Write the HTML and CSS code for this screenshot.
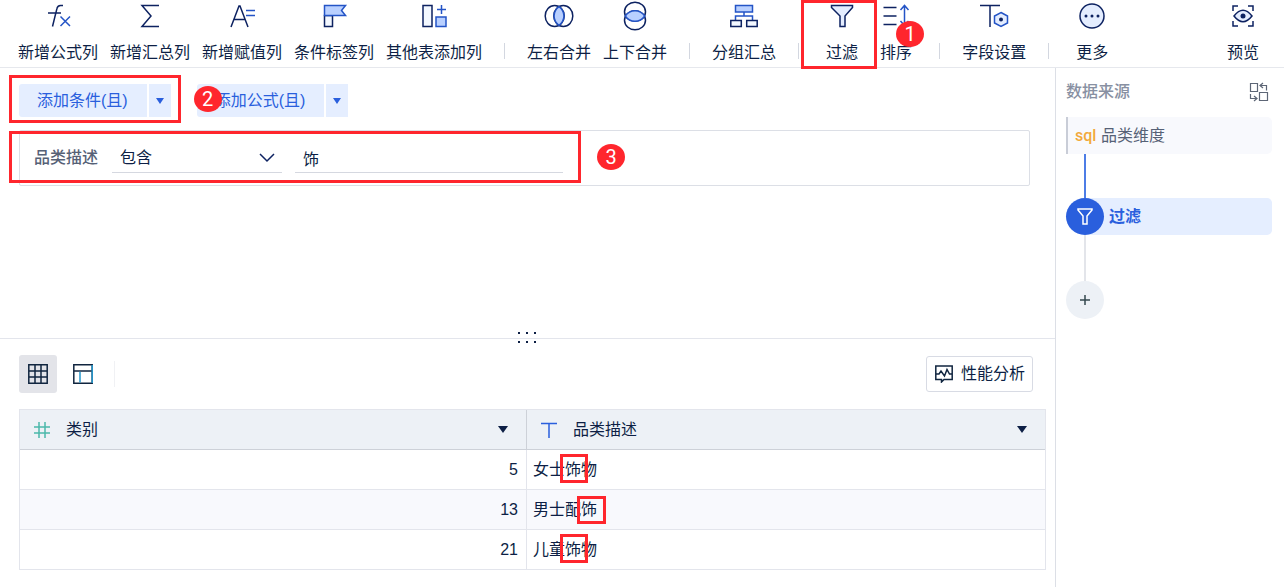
FILE: index.html
```html
<!DOCTYPE html>
<html lang="zh-CN">
<head>
<meta charset="UTF-8">
<meta name="viewport" content="width=device-width, initial-scale=1">
<title>过滤</title>
<link rel="stylesheet" href="styles.css">
</head>
<body>

<header class="toolbar">
  <button class="tool">
    <svg width="28" height="24" viewBox="0 0 28 24"><path d="M19 1.500h-2.500q-3 0-3.600 3.200L8.500 22.500M4 9h13"/><path class="blue" d="M16.500 12.500l9.500 9.500M26 12.500l-9.500 9.500"/></svg>
    <span>新增公式列</span>
  </button>
  <button class="tool">
    <svg width="28" height="24" viewBox="0 0 28 24"><path d="M23 1.500H6L15 12 6 22.500h17"/></svg>
    <span>新增汇总列</span>
  </button>
  <button class="tool">
    <svg width="28" height="24" viewBox="0 0 28 24"><path d="M3 23L11 2h1l8 21M6 15.500h11"/><path class="blue" d="M18 6.500h9M18 11.500h9"/></svg>
    <span>新增赋值列</span>
  </button>
  <button class="tool">
    <svg width="28" height="24" viewBox="0 0 28 24"><path class="pale" d="M4.500 11.500h8v11h-8z"/><path class="blue fill" d="M4.500 1.500h21l-4 5 4 5h-21z"/></svg>
    <span>条件标签列</span>
  </button>
  <button class="tool">
    <svg width="28" height="24" viewBox="0 0 28 24"><path class="pale" d="M3 1.500h9v21H3z"/><path class="blue fill" d="M16 13h10v9.500H16z"/><path class="blue" d="M21.500 1v9M17 5.500h9"/></svg>
    <span>其他表添加列</span>
  </button>
  <i class="tool-line"></i>
  <button class="tool">
    <svg width="30" height="24" viewBox="0 0 30 24"><ellipse cx="10.700" cy="12" rx="9.500" ry="10.500"/><ellipse cx="19.300" cy="12" rx="9.500" ry="10.500"/><path class="blue fill" d="M15 2.700c6.600 5 6.600 13.600 0 18.600-6.600-5-6.600-13.600 0-18.600z"/></svg>
    <span>左右合并</span>
  </button>
  <button class="tool">
    <svg width="28" height="30" viewBox="0 0 28 30"><ellipse cx="14" cy="10.700" rx="10.500" ry="9.500"/><ellipse cx="14" cy="19.300" rx="10.500" ry="9.500"/><path class="blue fill" d="M4.200 15c5-7 14.600-7 19.600 0-5 7-14.600 7-19.600 0z"/></svg>
    <span>上下合并</span>
  </button>
  <i class="tool-line"></i>
  <button class="tool">
    <svg width="28" height="24" viewBox="0 0 28 24"><path class="blue fill" d="M5.500 1.500h17v6.500h-17z"/><path class="blue" d="M14 8v4M5.500 16v-4h17v4"/><path class="pale" d="M.8 16.500h10.500v6H.8zM16.700 16.500h10.500v6H16.700z"/></svg>
    <span>分组汇总</span>
  </button>
  <i class="tool-line"></i>
  <button class="tool">
    <svg width="28" height="24" viewBox="0 0 28 24"><path class="soft" d="M3.500 1.500h21v2L17 12v10.500h-5V12L3.500 3.500z"/></svg>
    <span>过滤</span>
    <i class="mark mark-tool"></i>
    <i class="step step-tool">1</i>
  </button>
  <button class="tool">
    <svg width="28" height="24" viewBox="0 0 28 24"><path d="M1.500 3.500h13M1.500 12h13M1.500 20.500h13"/><path class="blue" d="M22.500 2v19M18.500 6l4-4.500 4 4.500M18.500 17l4 4.500 4-4.500"/></svg>
    <span>排序</span>
  </button>
  <i class="tool-line"></i>
  <button class="tool">
    <svg width="30" height="24" viewBox="0 0 30 24"><path d="M1 1.500h20M11 1.500V23"/><path class="blue soft" d="M22 8.500l6.500 3.500v7L22 22.500 15.500 19v-7z"/><circle class="dot" cx="22" cy="15.500" r="2"/></svg>
    <span>字段设置</span>
  </button>
  <i class="tool-line"></i>
  <button class="tool">
    <svg width="28" height="26" viewBox="0 0 28 26"><circle class="soft" cx="14" cy="13" r="12"/><g class="dot"><circle cx="8" cy="13" r="1.500"/><circle cx="14" cy="13" r="1.500"/><circle cx="20" cy="13" r="1.500"/></g></svg>
    <span>更多</span>
  </button>
  <button class="tool tool-preview">
    <svg width="28" height="24" viewBox="0 0 28 24"><path d="M4 7V2h5M19 2h5v5M24 17v5h-5M9 22H4v-5"/><path class="soft" d="M5 12q9-11.500 18 0-9 11.500-18 0z"/><circle class="dot" cx="14" cy="12" r="2.500"/></svg>
    <span>预览</span>
  </button>
</header>

<div class="workspace">
  <main class="content">
    <section class="config">
      <div class="add-row">
        <div class="split-btn">
          <button class="split-main">添加条件(且)</button>
          <button class="split-arrow" aria-label="更多条件"><i class="caret"></i></button>
          <i class="mark mark-add"></i>
        </div>
        <div class="split-btn">
          <button class="split-main">添加公式(且)</button>
          <button class="split-arrow" aria-label="更多公式"><i class="caret"></i></button>
          <i class="step step-add">2</i>
        </div>
      </div>

      <div class="condition">
        <label for="operator">品类描述</label>
        <div class="select-box">
          <select id="operator">
            <option>包含</option>
            <option>不包含</option>
          </select>
          <svg width="16" height="10" viewBox="0 0 16 10"><path d="M1 1l7 7 7-7"/></svg>
        </div>
        <input type="text" value="饰" aria-label="包含的文字">
        <i class="mark mark-condition"></i>
        <i class="step step-condition">3</i>
      </div>
    </section>

    <div class="splitter">
      <svg width="20" height="12" viewBox="0 0 20 12"><path d="M1 0h2v2H1zM9 0h2v2H9zM17 0h2v2h-2zM1 9h2v2H1zM9 9h2v2H9zM17 9h2v2h-2z"/></svg>
    </div>

    <section class="result">
      <div class="result-bar">
        <button class="view-btn active" aria-label="表格视图">
          <svg width="20" height="20" viewBox="0 0 20 20"><path d="M.8.8h18.400v18.400H.8zM.8 7h18.400M.8 13h18.400M7 .8v18.400M13 .8v18.400"/></svg>
        </button>
        <button class="view-btn" aria-label="布局视图">
          <svg width="20" height="20" viewBox="0 0 20 20"><path d="M.8.8h18.400v18.400H.8zM.8 7h18.400"/><path class="cyan" d="M7 7.800v10.700M19.200 1v18"/></svg>
        </button>
        <i class="bar-line"></i>
        <button class="perf-btn">
          <svg width="18" height="18" viewBox="0 0 18 18"><path d="M.8 1h16.400v13.500H9L6.500 17v-2.500H.8zM1 9h3l2-3 3.500 5L12 4.500 14.500 9H17"/></svg>
          性能分析
        </button>
      </div>

      <table>
        <thead>
          <tr>
            <th class="col-type">
              <div class="th-box">
                <svg class="number" width="16" height="16" viewBox="0 0 16 16"><path d="M5 0v16M11 0v16M0 5h16M0 11h16"/></svg>
                类别
                <i class="caret"></i>
              </div>
            </th>
            <th>
              <div class="th-box">
                <svg class="text" width="16" height="16" viewBox="0 0 16 16"><path d="M0 1.500h16M8 1.500V16"/></svg>
                品类描述
                <i class="caret"></i>
              </div>
            </th>
          </tr>
        </thead>
        <tbody>
          <tr><td class="num">5</td><td>女士<span class="hit">饰</span>物</td></tr>
          <tr><td class="num">13</td><td>男士配<span class="hit hit-end">饰</span></td></tr>
          <tr><td class="num">21</td><td>儿童<span class="hit">饰</span>物</td></tr>
        </tbody>
      </table>
    </section>
  </main>

  <aside class="flow">
    <div class="flow-title">
      <span>数据来源</span>
      <svg width="20" height="20" viewBox="0 0 20 20"><path d="M1.500 1.500h7v8h-7zM10.500 10.500h8v8h-8zM11.500 3.500h6v5M14 1l-3 2.500L14 6M1.500 12v4.500h6M5 14l3 2.500L5 19"/></svg>
    </div>
    <div class="node source"><span class="sql">sql</span>品类维度</div>
    <div class="link done"></div>
    <div class="node current">
      <span class="node-icon"><svg width="16" height="17" viewBox="0 0 16 17"><path d="M1 1h14v1L10 8v8H6V8L1 2z"/></svg></span>
      过滤
    </div>
    <div class="link"></div>
    <button class="add-node" aria-label="添加步骤"><svg width="12" height="12" viewBox="0 0 12 12"><path d="M6 1v10M1 6h10"/></svg></button>
  </aside>
</div>

</body>
</html>
```
FILE: styles.css
```css
* {
  box-sizing: border-box;
}

body {
  margin: 0;
  min-height: 100vh;
  display: flex;
  flex-direction: column;
  background: #fff;
  color: #0d1f45;
  font: 16px/24px "Liberation Sans", "Noto Sans CJK SC", sans-serif;
}

button,
input,
select {
  font: inherit;
  color: inherit;
  border: none;
  border-radius: 0;
  background: none;
  padding: 0;
  margin: 0;
  outline: none;
}

button {
  cursor: pointer;
}

i {
  font-style: normal;
}

svg {
  display: block;
  flex: none;
  fill: none;
  stroke: #0d2261;
  stroke-width: 1.5;
}

/* toolbar */
.toolbar {
  display: flex;
  height: 68px;
  padding: 0 14px 0 12px;
  border-bottom: 1px solid #e6e8ed;
}

.tool {
  position: relative;
  display: flex;
  flex-direction: column;
  align-items: center;
  justify-content: flex-end;
  min-width: 54px;
  padding: 0 6px 2px;
  white-space: nowrap;
}

.tool svg {
  height: 32px;
  margin-bottom: 9px;
}

.tool-line {
  align-self: flex-end;
  flex: none;
  width: 1px;
  height: 16px;
  margin: 0 16px 8px;
  background: #d3d7e0;
}

.tool-preview {
  margin-left: auto;
}

svg .blue {
  stroke: #2454c6;
}

svg .fill {
  fill: #b9d0ff;
}

svg .soft {
  fill: #e4edff;
}

svg .pale {
  fill: #f3f8ff;
}

svg .dot {
  fill: #0d2261;
  stroke: none;
}

/* red marks over the controls */
.mark {
  position: absolute;
  border: 3px solid #ff262d;
  pointer-events: none;
  z-index: 2;
}

.step {
  position: absolute;
  width: 28px;
  height: 26px;
  border-radius: 50%;
  background: #ff262d;
  color: #fff;
  font-family: Roboto, sans-serif;
  font-size: 20px;
  line-height: 26px;
  text-align: center;
  z-index: 3;
}

.mark-tool {
  top: 0;
  bottom: -2px;
  left: -14px;
  right: -8px;
}

.step-tool {
  top: 21px;
  right: -55px;
}

.mark-add {
  top: -9px;
  bottom: -6px;
  left: -10px;
  right: -10px;
}

.step-add {
  top: 2px;
  left: -3px;
}

.mark-condition {
  top: 0;
  bottom: 2px;
  left: -11px;
  width: 572px;
}

.step-condition {
  top: 13px;
  left: 577px;
}

/* workspace */
.workspace {
  flex: 1;
  display: flex;
}

.content {
  flex: 1;
  min-width: 0;
}

.config {
  min-height: 270px;
  padding: 16px 25px 16px 19px;
}

.add-row {
  display: flex;
  gap: 26px;
  margin-bottom: 13px;
}

.split-btn {
  position: relative;
  display: flex;
  gap: 2px;
  height: 33px;
  color: #2a5fdd;
}

.split-main {
  padding: 1px 19px 0 18px;
  background: #e5eeff;
  border-radius: 3px 0 0 3px;
}

.split-arrow {
  display: flex;
  align-items: center;
  justify-content: center;
  width: 22px;
  background: #e5eeff;
}

.caret {
  border: 4px solid transparent;
  border-top: 6px solid currentColor;
  border-bottom: none;
}

.condition {
  position: relative;
  display: flex;
  align-items: center;
  height: 56px;
  padding: 0 14px;
  border: 1px solid #dcdfe6;
  border-radius: 2px;
}

.condition label {
  margin-right: 14px;
  color: #566176;
  font-weight: 500;
}

.select-box {
  position: relative;
  width: 170px;
  margin-right: 13px;
}

.select-box svg {
  position: absolute;
  top: 10px;
  right: 7px;
  pointer-events: none;
}

.condition select,
.condition input {
  height: 30px;
  padding: 0 8px;
  border-bottom: 1px solid #d5d8e0;
}

.condition select {
  appearance: none;
  display: block;
  width: 100%;
}

.condition input {
  width: 268px;
}

.splitter {
  position: relative;
  height: 1px;
  background: #e3e5ec;
}

.splitter svg {
  position: absolute;
  top: -6px;
  left: 50%;
  margin-left: -11px;
  fill: #0d1f45;
  stroke: none;
}

/* result table */
.result {
  padding: 16px 9px 16px 19px;
}

.result-bar {
  display: flex;
  align-items: center;
  height: 38px;
  margin-bottom: 16px;
}

.result-bar svg {
  stroke: #10253f;
}

.result-bar .cyan {
  stroke: #2597cc;
}

.view-btn {
  display: flex;
  align-items: center;
  justify-content: center;
  width: 38px;
  height: 38px;
  margin-right: 7px;
  border-radius: 3px;
}

.view-btn.active {
  background: #e3e4e9;
}

.bar-line {
  width: 1px;
  height: 26px;
  margin-left: 5px;
  background: #f0f1f4;
}

.perf-btn {
  display: flex;
  align-items: center;
  gap: 8px;
  height: 36px;
  margin-left: auto;
  margin-right: 13px;
  padding: 0 7px 0 8px;
  border: 1px solid #d8dbe4;
  border-radius: 3px;
}

table {
  width: 100%;
  table-layout: fixed;
  border-collapse: separate;
  border-spacing: 0;
  border: 1px solid #e3e5ec;
  border-bottom: none;
}

th,
td {
  height: 40px;
  padding: 0 8px 0 6px;
  border-bottom: 1px solid #e3e5ec;
  text-align: left;
  font-weight: 400;
}

th {
  padding: 0 18px 0 14px;
  background: #edf1f6;
  border-bottom-color: #cdd1d8;
}

th:first-child {
  border-right: 1px solid #cdd1d8;
}

td:first-child {
  border-right: 1px solid #e3e5ec;
}

.col-type {
  width: 507px;
}

.th-box {
  display: flex;
  align-items: center;
}

.th-box svg {
  margin-right: 16px;
}

.th-box .number {
  stroke: #4bb8ab;
}

.th-box .text {
  stroke: #2a5fdd;
}

.th-box .caret {
  margin-left: auto;
  border-width: 7px 5px 0;
}

tbody tr:nth-child(even) {
  background: #f8f9fd;
}

.num {
  text-align: right;
}

.hit {
  position: relative;
}

.hit::after {
  content: "";
  position: absolute;
  top: -7px;
  bottom: -5px;
  left: -5px;
  right: -7px;
  border: 3px solid #ff262d;
}

.hit-end::after {
  top: -5px;
  bottom: -6px;
  left: -4px;
  right: -9px;
}

/* flow of steps */
.flow {
  width: 229px;
  padding: 12px 12px 12px 10px;
  border-left: 1px solid #dcdfe6;
}

.flow-title {
  display: flex;
  align-items: center;
  justify-content: space-between;
  margin-bottom: 13px;
  padding-right: 3px;
  color: #8890a2;
  font-weight: 500;
}

.flow-title svg {
  stroke: #5d6676;
  stroke-width: 1.2;
}

.node {
  display: flex;
  align-items: center;
  height: 37px;
  border-radius: 5px;
}

.source {
  padding-left: 7px;
  border-left: 2px solid #c9cdd7;
  border-radius: 0 5px 5px 0;
  background: #f8f9fd;
  color: #566176;
}

.sql {
  width: 26px;
  color: #f2a93b;
  font-family: Roboto, sans-serif;
  font-weight: 500;
}

.current {
  background: #e5eeff;
  border-radius: 19px 5px 5px 19px;
  color: #2a5fdd;
  font-weight: 700;
}

.node-icon {
  display: flex;
  align-items: center;
  justify-content: center;
  width: 38px;
  height: 37px;
  margin-right: 5px;
  border-radius: 50%;
  background: #2a5fdd;
}

.node-icon svg {
  stroke: #fff;
}

.link {
  width: 2px;
  height: 46px;
  margin-left: 18px;
  background: #e3e5ea;
}

.link.done {
  height: 44px;
  background: #4d7de6;
}

.add-node {
  display: flex;
  align-items: center;
  justify-content: center;
  width: 38px;
  height: 38px;
  border-radius: 50%;
  background: #edf1f6;
}

.add-node svg {
  stroke: #35484f;
}
```
